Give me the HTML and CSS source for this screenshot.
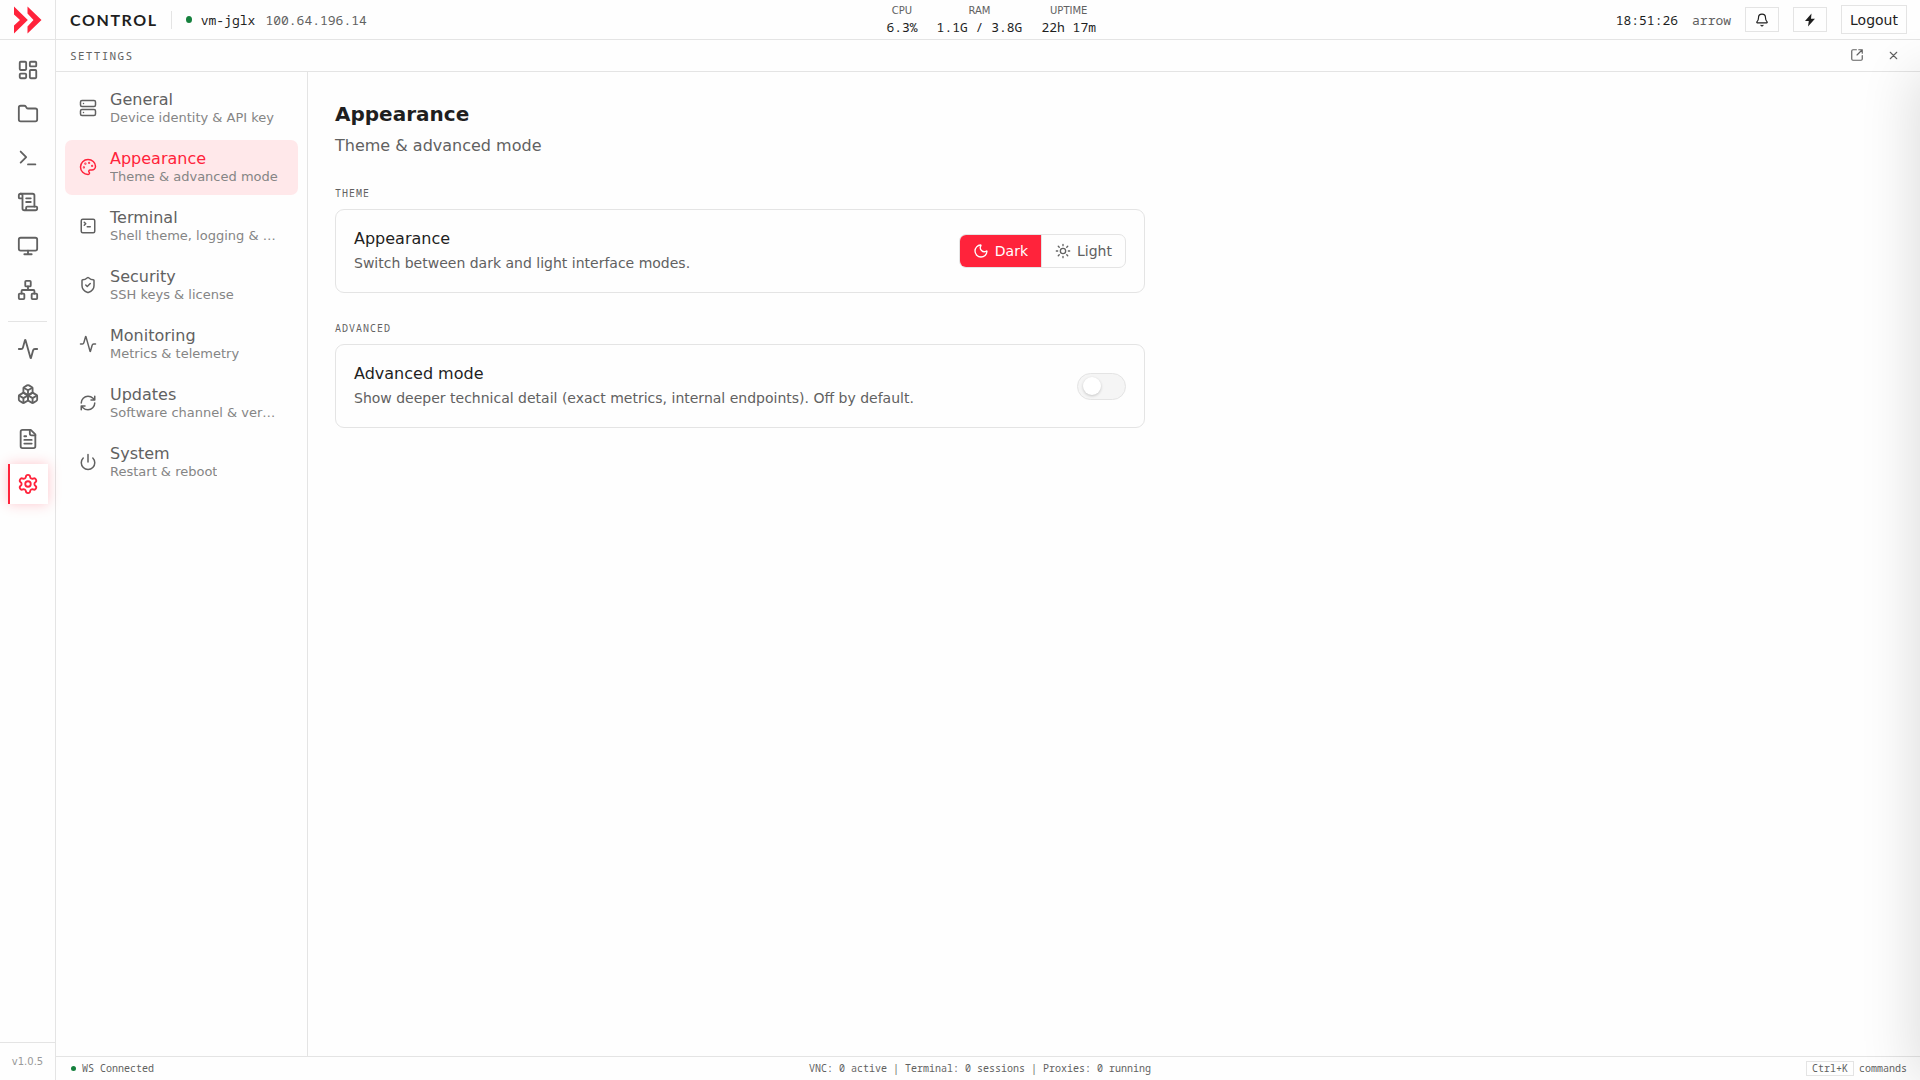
FILE: index.html
```
<!DOCTYPE html>
<html lang="en">
<head>
<meta charset="utf-8">
<meta name="viewport" content="width=device-width, initial-scale=1">
<title>Control – Settings</title>
<link rel="stylesheet" href="styles.css">
</head>
<body>
<div class="app">
  <aside class="rail">
    <a class="logo" href="#" aria-label="Home">
      <svg width="28" height="28" viewBox="0 0 28 28" fill="currentColor"><path d="M0 0.5 13.8 14 0 27.5V19.5L6 14 0 8.5zM13.5 0.5 27.5 14 13.5 27.5V20.5L19.5 14 13.5 7.5z"/></svg>
    </a>
    <nav class="rail-nav" aria-label="Main">
      <div class="rail-group">
        <a class="rail-item" href="#" aria-label="Dashboard"><svg class="icon" viewBox="0 0 24 24"><rect width="7" height="9" x="3" y="3" rx="1"/><rect width="7" height="5" x="14" y="3" rx="1"/><rect width="7" height="9" x="14" y="12" rx="1"/><rect width="7" height="5" x="3" y="16" rx="1"/></svg></a>
        <a class="rail-item" href="#" aria-label="Files"><svg class="icon" viewBox="0 0 24 24"><path d="M20 20a2 2 0 0 0 2-2V8a2 2 0 0 0-2-2h-7.9a2 2 0 0 1-1.69-.9L9.6 3.9A2 2 0 0 0 7.93 3H4a2 2 0 0 0-2 2v13a2 2 0 0 0 2 2Z"/></svg></a>
        <a class="rail-item" href="#" aria-label="Terminal"><svg class="icon" viewBox="0 0 24 24"><path d="m4 17 6-6-6-6M12 19h8"/></svg></a>
        <a class="rail-item" href="#" aria-label="Scripts"><svg class="icon" viewBox="0 0 24 24"><path d="M15 12h-5M15 8h-5M19 17V5a2 2 0 0 0-2-2H4"/><path d="M8 21h12a2 2 0 0 0 2-2v-1a1 1 0 0 0-1-1H11a1 1 0 0 0-1 1v1a2 2 0 1 1-4 0V5a2 2 0 1 0-4 0v2a1 1 0 0 0 1 1h3"/></svg></a>
        <a class="rail-item" href="#" aria-label="Desktop"><svg class="icon" viewBox="0 0 24 24"><rect width="20" height="14" x="2" y="3" rx="2"/><path d="M8 21h8M12 17v4"/></svg></a>
        <a class="rail-item" href="#" aria-label="Network"><svg class="icon" viewBox="0 0 24 24"><rect x="16" y="16" width="6" height="6" rx="1"/><rect x="2" y="16" width="6" height="6" rx="1"/><rect x="9" y="2" width="6" height="6" rx="1"/><path d="M5 16v-3a1 1 0 0 1 1-1h12a1 1 0 0 1 1 1v3M12 12V8"/></svg></a>
      </div>
      <div class="rail-group rail-group-tools">
        <a class="rail-item" href="#" aria-label="Monitoring"><svg class="icon" viewBox="0 0 24 24"><path d="M22 12h-2.48a2 2 0 0 0-1.93 1.46l-2.35 8.36a.25.25 0 0 1-.48 0L9.24 2.18a.25.25 0 0 0-.48 0l-2.35 8.36A2 2 0 0 1 4.49 12H2"/></svg></a>
        <a class="rail-item" href="#" aria-label="Containers"><svg class="icon" viewBox="0 0 24 24"><path d="M2.97 12.92A2 2 0 0 0 2 14.63v3.24a2 2 0 0 0 .97 1.71l3 1.8a2 2 0 0 0 2.06 0L12 19v-5.5l-5-3-4.03 2.42Z"/><path d="m7 16.5-4.74-2.85M7 16.5l5-3M7 16.5v5.17"/><path d="M12 13.5V19l3.97 2.38a2 2 0 0 0 2.06 0l3-1.8a2 2 0 0 0 .97-1.71v-3.24a2 2 0 0 0-.97-1.71L17 10.5l-5 3Z"/><path d="m17 16.5-5-3M17 16.5l4.74-2.85M17 16.5v5.17"/><path d="M7.97 4.42A2 2 0 0 0 7 6.13v4.37l5 3 5-3V6.13a2 2 0 0 0-.97-1.71l-3-1.8a2 2 0 0 0-2.06 0l-3 1.8Z"/><path d="M12 8 7.26 5.15M12 8l4.74-2.85M12 13.5V8"/></svg></a>
        <a class="rail-item" href="#" aria-label="Logs"><svg class="icon" viewBox="0 0 24 24"><path d="M15 2H6a2 2 0 0 0-2 2v16a2 2 0 0 0 2 2h12a2 2 0 0 0 2-2V7Z"/><path d="M14 2v4a2 2 0 0 0 2 2h4M10 9H8M16 13H8M16 17H8"/></svg></a>
        <a class="rail-item rail-item-active" href="#" aria-label="Settings" aria-current="page"><svg class="icon" viewBox="0 0 24 24"><path d="M9.671 4.136a2.34 2.34 0 0 1 4.659 0 2.34 2.34 0 0 0 3.319 1.915 2.34 2.34 0 0 1 2.33 4.033 2.34 2.34 0 0 0 0 3.831 2.34 2.34 0 0 1-2.33 4.033 2.34 2.34 0 0 0-3.319 1.915 2.34 2.34 0 0 1-4.659 0 2.34 2.34 0 0 0-3.32-1.915 2.34 2.34 0 0 1-2.33-4.033 2.34 2.34 0 0 0 0-3.831A2.34 2.34 0 0 1 6.35 6.051a2.34 2.34 0 0 0 3.319-1.915"/><circle cx="12" cy="12" r="3"/></svg></a>
      </div>
    </nav>
    <div class="version">v1.0.5</div>
  </aside>

  <div class="workspace">
    <header class="topbar">
      <div class="identity">
        <h1 class="brand">CONTROL</h1>
        <div class="host"><span class="dot"></span><span class="host-name">vm-jglx</span><span class="muted">100.64.196.14</span></div>
      </div>
      <dl class="stats">
        <div class="stat"><dt>CPU</dt><dd>6.3%</dd></div>
        <div class="stat"><dt>RAM</dt><dd>1.1G / 3.8G</dd></div>
        <div class="stat"><dt>UPTIME</dt><dd>22h 17m</dd></div>
      </dl>
      <div class="session">
        <time>18:51:26</time>
        <span class="muted">arrow</span>
        <button class="box-btn" type="button" aria-label="Notifications"><svg class="icon" viewBox="0 0 24 24"><path d="M10.268 21a2 2 0 0 0 3.464 0M3.262 15.326A1 1 0 0 0 4 17h16a1 1 0 0 0 .74-1.673C19.41 13.956 18 12.499 18 8A6 6 0 0 0 6 8c0 4.499-1.411 5.956-2.738 7.326"/></svg></button>
        <button class="box-btn" type="button" aria-label="Quick actions"><svg class="bolt" viewBox="0 0 12 14"><path d="M7.5 0.5 1 8h3.8L4 13.5 11 5.8H7z"/></svg></button>
        <button class="box-btn logout" type="button">Logout</button>
      </div>
    </header>

    <div class="panel-bar">
      <span class="panel-title">SETTINGS</span>
      <div class="panel-actions">
        <button class="plain-btn" type="button" aria-label="Open in new window"><svg class="icon" viewBox="0 0 24 24"><path d="M21 13v6a2 2 0 0 1-2 2H5a2 2 0 0 1-2-2V5a2 2 0 0 1 2-2h6M21 3l-9 9M15 3h6v6"/></svg></button>
        <button class="plain-btn" type="button" aria-label="Close"><svg class="icon icon-close" viewBox="0 0 24 24"><path d="M18 6 6 18M6 6l12 12"/></svg></button>
      </div>
    </div>

    <div class="panel">
      <nav class="sections" aria-label="Settings sections">
        <a class="section" href="#"><svg class="icon" viewBox="0 0 24 24"><rect width="20" height="8" x="2" y="2" rx="2"/><rect width="20" height="8" x="2" y="14" rx="2"/><path d="M6 6h.01M6 18h.01"/></svg><span class="section-text"><span class="section-name">General</span><span class="section-note">Device identity &amp; API key</span></span></a>
        <a class="section section-active" href="#" aria-current="page"><svg class="icon" viewBox="0 0 24 24"><path d="M12 22a1 1 0 0 1 0-20 10 9 0 0 1 10 9 5 5 0 0 1-5 5h-2.25a1.75 1.75 0 0 0-1.4 2.8l.3.4a1.75 1.75 0 0 1-1.4 2.8z"/><circle cx="13.5" cy="6.5" r=".5"/><circle cx="17.5" cy="10.5" r=".5"/><circle cx="6.5" cy="12.5" r=".5"/><circle cx="8.5" cy="7.5" r=".5"/></svg><span class="section-text"><span class="section-name">Appearance</span><span class="section-note">Theme &amp; advanced mode</span></span></a>
        <a class="section" href="#"><svg class="icon" viewBox="0 0 24 24"><path d="m7 11 2-2-2-2M11 13h4"/><rect width="18" height="18" x="3" y="3" rx="2"/></svg><span class="section-text"><span class="section-name">Terminal</span><span class="section-note">Shell theme, logging &amp; history</span></span></a>
        <a class="section" href="#"><svg class="icon" viewBox="0 0 24 24"><path d="M20 13c0 5-3.5 7.5-7.66 8.95a1 1 0 0 1-.67-.01C7.5 20.5 4 18 4 13V6a1 1 0 0 1 1-1c2 0 4.5-1.2 6.24-2.72a1.17 1.17 0 0 1 1.52 0C14.51 3.81 17 5 19 5a1 1 0 0 1 1 1z"/><path d="m9 12 2 2 4-4"/></svg><span class="section-text"><span class="section-name">Security</span><span class="section-note">SSH keys &amp; license</span></span></a>
        <a class="section" href="#"><svg class="icon" viewBox="0 0 24 24"><path d="M22 12h-2.48a2 2 0 0 0-1.93 1.46l-2.35 8.36a.25.25 0 0 1-.48 0L9.24 2.18a.25.25 0 0 0-.48 0l-2.35 8.36A2 2 0 0 1 4.49 12H2"/></svg><span class="section-text"><span class="section-name">Monitoring</span><span class="section-note">Metrics &amp; telemetry</span></span></a>
        <a class="section" href="#"><svg class="icon" viewBox="0 0 24 24"><path d="M3 12a9 9 0 0 1 9-9 9.75 9.75 0 0 1 6.74 2.74L21 8M21 3v5h-5M21 12a9 9 0 0 1-9 9 9.75 9.75 0 0 1-6.74-2.74L3 16M8 16H3v5"/></svg><span class="section-text"><span class="section-name">Updates</span><span class="section-note">Software channel &amp; version</span></span></a>
        <a class="section" href="#"><svg class="icon" viewBox="0 0 24 24"><path d="M12 2v10M18.4 6.6a9 9 0 1 1-12.77.04"/></svg><span class="section-text"><span class="section-name">System</span><span class="section-note">Restart &amp; reboot</span></span></a>
      </nav>

      <main class="content">
        <h2 class="page-title">Appearance</h2>
        <p class="page-note">Theme &amp; advanced mode</p>

        <h3 class="group-label">THEME</h3>
        <section class="card">
          <div class="card-text">
            <div class="card-title">Appearance</div>
            <p class="card-note">Switch between dark and light interface modes.</p>
          </div>
          <div class="segmented" role="group" aria-label="Appearance">
            <button class="segment segment-on" type="button" aria-pressed="true"><svg class="icon" viewBox="0 0 24 24"><path d="M20.985 12.486a9 9 0 1 1-9.473-9.472c.405-.022.617.46.402.803a6 6 0 0 0 8.268 8.268c.344-.215.825-.004.803.401"/></svg>Dark</button>
            <button class="segment" type="button" aria-pressed="false"><svg class="icon" viewBox="0 0 24 24"><circle cx="12" cy="12" r="4"/><path d="M12 2v2M12 20v2M4.93 4.93l1.41 1.41M17.66 17.66l1.41 1.41M2 12h2M20 12h2M6.34 17.66l-1.41 1.41M19.07 4.93l-1.41 1.41"/></svg>Light</button>
          </div>
        </section>

        <h3 class="group-label">ADVANCED</h3>
        <section class="card">
          <div class="card-text">
            <label class="card-title" for="advanced">Advanced mode</label>
            <p class="card-note">Show deeper technical detail (exact metrics, internal endpoints). Off by default.</p>
          </div>
          <input class="switch" type="checkbox" role="switch" id="advanced">
        </section>
      </main>
    </div>

    <footer class="statusbar">
      <div class="status"><span class="dot dot-small"></span>WS Connected</div>
      <div>VNC: 0 active | Terminal: 0 sessions | Proxies: 0 running</div>
      <div class="hint"><kbd>Ctrl+K</kbd>commands</div>
    </footer>
  </div>
</div>
<div class="drawer" aria-hidden="true"></div>
</body>
</html>
```
FILE: styles.css
```
:root {
  --sans: "DejaVu Sans", sans-serif;
  --mono: "Noto Sans Mono", "DejaVu Sans Mono", monospace;
  --accent: #ff233b;
  --ink: #1f1f1f;
  --soft: #616161;
  --faint: #858585;
  --line: #e4e4e4;
  --ok: #15803d;
}

* { box-sizing: border-box; }

body {
  margin: 0;
  background: #fefefe;
  color: var(--ink);
  font-family: var(--sans);
  font-size: 14px;
  overflow: hidden;
}

h1, h2, h3, p, dl, dd { margin: 0; }
a { color: inherit; text-decoration: none; }
button { font: inherit; color: inherit; background: none; border: 0; padding: 0; cursor: pointer; }

.icon {
  flex: none;
  width: 16px;
  height: 16px;
  fill: none;
  stroke: currentColor;
  stroke-width: 2;
  stroke-linecap: round;
  stroke-linejoin: round;
}

.app { display: flex; height: 100vh; }

/* Icon rail */
.rail {
  display: flex;
  flex-direction: column;
  flex: none;
  width: 56px;
  border-right: 1px solid var(--line);
  color: var(--soft);
}
.logo {
  display: flex;
  align-items: center;
  justify-content: center;
  height: 40px;
  border-bottom: 1px solid var(--line);
  color: var(--accent);
}
.rail-nav { flex: 1; padding: 10px 8px; }
.rail-group { display: flex; flex-direction: column; gap: 4px; }
.rail-group-tools {
  gap: 5px;
  margin-top: 11px;
  padding-top: 7px;
  border-top: 1px solid var(--line);
}
.rail-item { display: flex; align-items: center; justify-content: center; height: 40px; }
.rail-item .icon { width: 22px; height: 22px; }
.rail-item-active {
  margin-right: -1px;
  padding-right: 2px;
  border-left: 2px solid var(--accent);
  background: #fff;
  color: var(--accent);
  box-shadow: 0 0 12px rgba(255, 35, 59, 0.25);
}
.version {
  padding: 12px 0;
  border-top: 1px solid var(--line);
  color: #999;
  font: 10px/13px var(--sans);
  text-align: center;
}

/* Header */
.workspace { display: flex; flex-direction: column; flex: 1; min-width: 0; }
.topbar {
  display: flex;
  align-items: center;
  justify-content: space-between;
  height: 40px;
  padding: 0 13px 0 14px;
  border-bottom: 1px solid var(--line);
  font: 13px/16px var(--mono);
}
.identity, .host, .session, .stats { display: flex; align-items: center; }
.brand {
  padding-right: 13px;
  border-right: 1px solid var(--line);
  font: 700 16px/18px Lato, sans-serif;
  letter-spacing: 0.1em;
}
.host { padding-left: 14px; }
.host-name { margin: 0 10px 0 9px; }
.dot { width: 6px; height: 7px; border-radius: 50%; background: var(--ok); }
.muted { color: var(--soft); }
.stats { gap: 19px; padding-bottom: 2px; text-align: center; }
.stat dt { color: var(--soft); font: 10px/16px var(--sans); }
.stat dd { line-height: 16px; }
.session { gap: 14px; }
.box-btn {
  display: flex;
  align-items: center;
  justify-content: center;
  width: 34px;
  height: 25px;
  border: 1px solid var(--line);
}
.box-btn .icon { width: 14px; height: 14px; }
.bolt { width: 12px; height: 14px; fill: currentColor; }
.logout { width: auto; height: 29px; padding: 0 8px; font: 14px/18px var(--sans); }

/* Settings panel */
.panel-bar {
  display: flex;
  align-items: center;
  justify-content: space-between;
  height: 32px;
  padding: 0 20px 0 14px;
  border-bottom: 1px solid var(--line);
  color: var(--soft);
}
.panel-title { font: 11px/15px var(--mono); letter-spacing: 0.12em; }
.panel-actions { display: flex; align-items: center; gap: 23px; padding-bottom: 1px; }
.plain-btn { display: flex; }
.plain-btn .icon { width: 14px; height: 14px; }
.plain-btn .icon-close { width: 13px; height: 13px; }
.panel { display: flex; flex: 1; min-height: 0; }
.sections {
  display: flex;
  flex-direction: column;
  flex: none;
  gap: 4px;
  width: 252px;
  padding: 9px;
  border-right: 1px solid var(--line);
}
.section {
  display: flex;
  align-items: center;
  gap: 13px;
  padding: 9px 18px 10px 14px;
  border-radius: 7px;
  color: var(--soft);
}
.section .icon { width: 18px; height: 18px; }
.section-text { display: flex; flex-direction: column; min-width: 0; }
.section-name { font-size: 16px; line-height: 19px; }
.section-note {
  overflow: hidden;
  color: var(--faint);
  font-size: 13px;
  line-height: 17px;
  text-overflow: ellipsis;
  white-space: nowrap;
}
.section-active { background: #ffe8ea; color: var(--accent); }

.content { flex: 1; padding: 29px 27px; }
.page-title { font-size: 20px; line-height: 26px; }
.page-note { margin-top: 8px; color: var(--soft); font-size: 16px; line-height: 22px; }
.group-label {
  margin: 29px 0 9px;
  color: var(--soft);
  font: 10px/14px var(--mono);
  letter-spacing: 1px;
}
.card {
  display: flex;
  align-items: center;
  justify-content: space-between;
  gap: 24px;
  max-width: 810px;
  padding: 18px;
  border: 1px solid var(--line);
  border-radius: 9px;
}
.card + .group-label { margin-top: 28px; }
.card-title { display: block; font-size: 16px; line-height: 22px; }
.card-note { margin-top: 2px; color: var(--soft); line-height: 22px; }

.segmented {
  display: flex;
  flex: none;
  overflow: hidden;
  border: 1px solid var(--line);
  border-radius: 7px;
}
.segment {
  display: flex;
  align-items: center;
  gap: 6px;
  height: 32px;
  padding: 0 13px;
  color: var(--soft);
}
.segment + .segment { border-left: 1px solid var(--line); }
.segment-on { background: var(--accent); color: #fff; }

.switch {
  display: flex;
  align-items: center;
  flex: none;
  appearance: none;
  width: 49px;
  height: 27px;
  margin: 0;
  padding: 0 5px;
  border: 1px solid var(--line);
  border-radius: 14px;
  background: #f5f5f5;
  cursor: pointer;
}
.switch::before {
  content: "";
  width: 18px;
  height: 18px;
  border-radius: 50%;
  background: #fff;
  box-shadow: 0 1px 3px rgba(0, 0, 0, 0.2);
}
.switch:checked { justify-content: flex-end; background: var(--accent); }

/* Footer */
.statusbar {
  display: flex;
  align-items: center;
  justify-content: space-between;
  height: 24px;
  padding: 0 13px 0 15px;
  border-top: 1px solid var(--line);
  color: var(--soft);
  font: 10px/13px var(--mono);
}
.status, .hint { display: flex; align-items: center; }
.dot-small { width: 5px; height: 5px; margin-right: 6px; }
.hint { gap: 5px; }
kbd { padding: 0 5px; border: 1px solid var(--line); font: inherit; }

/* Closed drawer, parked past the right edge; only its shadow shows */
.drawer {
  position: fixed;
  top: 72px;
  bottom: 0;
  left: 100%;
  width: 360px;
  box-shadow: -8px 0 50px rgba(0, 0, 0, 0.12);
  pointer-events: none;
}
```
